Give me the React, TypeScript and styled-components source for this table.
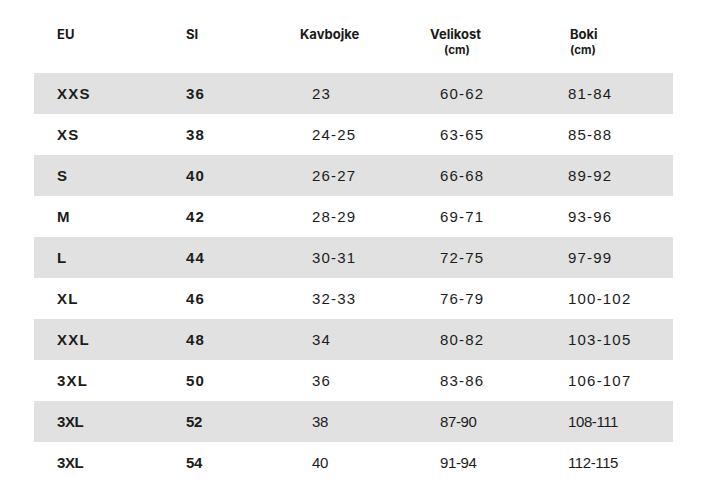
import styled, {createGlobalStyle} from "styled-components";

const GlobalStyle = createGlobalStyle`
    body {
        margin: 0;
        background: #ffffff;
        color: #1c1c1c;
        font-family: "Liberation Sans", Arial, sans-serif;
    }
`;

const COLUMNS = "129px 126px 128px 128px 1fr";

const Page = styled.div`
    width: 726px;
    height: 491px;
    padding: 0 53px 0 34px;
    box-sizing: border-box;
`;

const HeaderRow = styled.div`
    display: grid;
    grid-template-columns: ${COLUMNS};
    height: 73px;
    padding: 27px 0 0 23px;
    box-sizing: border-box;
`;

const HeaderCell = styled.div<{$shift?: number}>`
    display: flex;
    flex-direction: column;
    margin-left: ${(p) => p.$shift ?? 0}px;
    font-family: Inter, "Noto Sans", sans-serif;
    font-weight: 700;
    font-size: 13px;
    line-height: 15px;
    color: #1a1a1a;
`;

const Unit = styled.span<{$indent?: number}>`
    font-size: 11.5px;
    line-height: 16px;
    padding-left: ${(p) => p.$indent ?? 0}px;
`;

const Row = styled.div<{$shaded: boolean}>`
    display: grid;
    grid-template-columns: ${COLUMNS};
    align-items: center;
    height: 41px;
    padding-left: 23px;
    background: ${(p) => (p.$shaded ? "#e1e1e1" : "transparent")};
`;

const Cell = styled.div<{$bold?: boolean; $narrow?: boolean}>`
    font-family: ${(p) =>
        p.$narrow
            ? `"Liberation Sans Narrow", "Liberation Sans", Arial, sans-serif`
            : `"Liberation Sans", Arial, sans-serif`};
    font-size: 15px;
    font-weight: ${(p) => (p.$bold ? 700 : 400)};
    letter-spacing: ${(p) => (p.$narrow ? "-0.4px" : "1.2px")};
    color: #1c1c1c;
`;

interface SizeRow {
    eu: string;
    si: string;
    jeans: string;
    waist: string;
    hips: string;
    narrow?: boolean;
}

const ROWS: SizeRow[] = [
    {eu: "XXS", si: "36", jeans: "23", waist: "60-62", hips: "81-84"},
    {eu: "XS", si: "38", jeans: "24-25", waist: "63-65", hips: "85-88"},
    {eu: "S", si: "40", jeans: "26-27", waist: "66-68", hips: "89-92"},
    {eu: "M", si: "42", jeans: "28-29", waist: "69-71", hips: "93-96"},
    {eu: "L", si: "44", jeans: "30-31", waist: "72-75", hips: "97-99"},
    {eu: "XL", si: "46", jeans: "32-33", waist: "76-79", hips: "100-102"},
    {eu: "XXL", si: "48", jeans: "34", waist: "80-82", hips: "103-105"},
    {eu: "3XL", si: "50", jeans: "36", waist: "83-86", hips: "106-107"},
    {eu: "3XL", si: "52", jeans: "38", waist: "87-90", hips: "108-111", narrow: true},
    {eu: "3XL", si: "54", jeans: "40", waist: "91-94", hips: "112-115", narrow: true},
];

const App = () => {
    return (
        <Page>
            <GlobalStyle />
            <HeaderRow>
                <HeaderCell>EU</HeaderCell>
                <HeaderCell>SI</HeaderCell>
                <HeaderCell $shift={-12}>Kavbojke</HeaderCell>
                <HeaderCell $shift={-10}>
                    Velikost
                    <Unit $indent={14}>(cm)</Unit>
                </HeaderCell>
                <HeaderCell $shift={2}>
                    Boki
                    <Unit>(cm)</Unit>
                </HeaderCell>
            </HeaderRow>
            {ROWS.map((row, i) => (
                <Row key={i} $shaded={i % 2 === 0}>
                    <Cell $bold $narrow={row.narrow}>{row.eu}</Cell>
                    <Cell $bold $narrow={row.narrow}>{row.si}</Cell>
                    <Cell $narrow={row.narrow}>{row.jeans}</Cell>
                    <Cell $narrow={row.narrow}>{row.waist}</Cell>
                    <Cell $narrow={row.narrow}>{row.hips}</Cell>
                </Row>
            ))}
        </Page>
    );
};

export default App;
